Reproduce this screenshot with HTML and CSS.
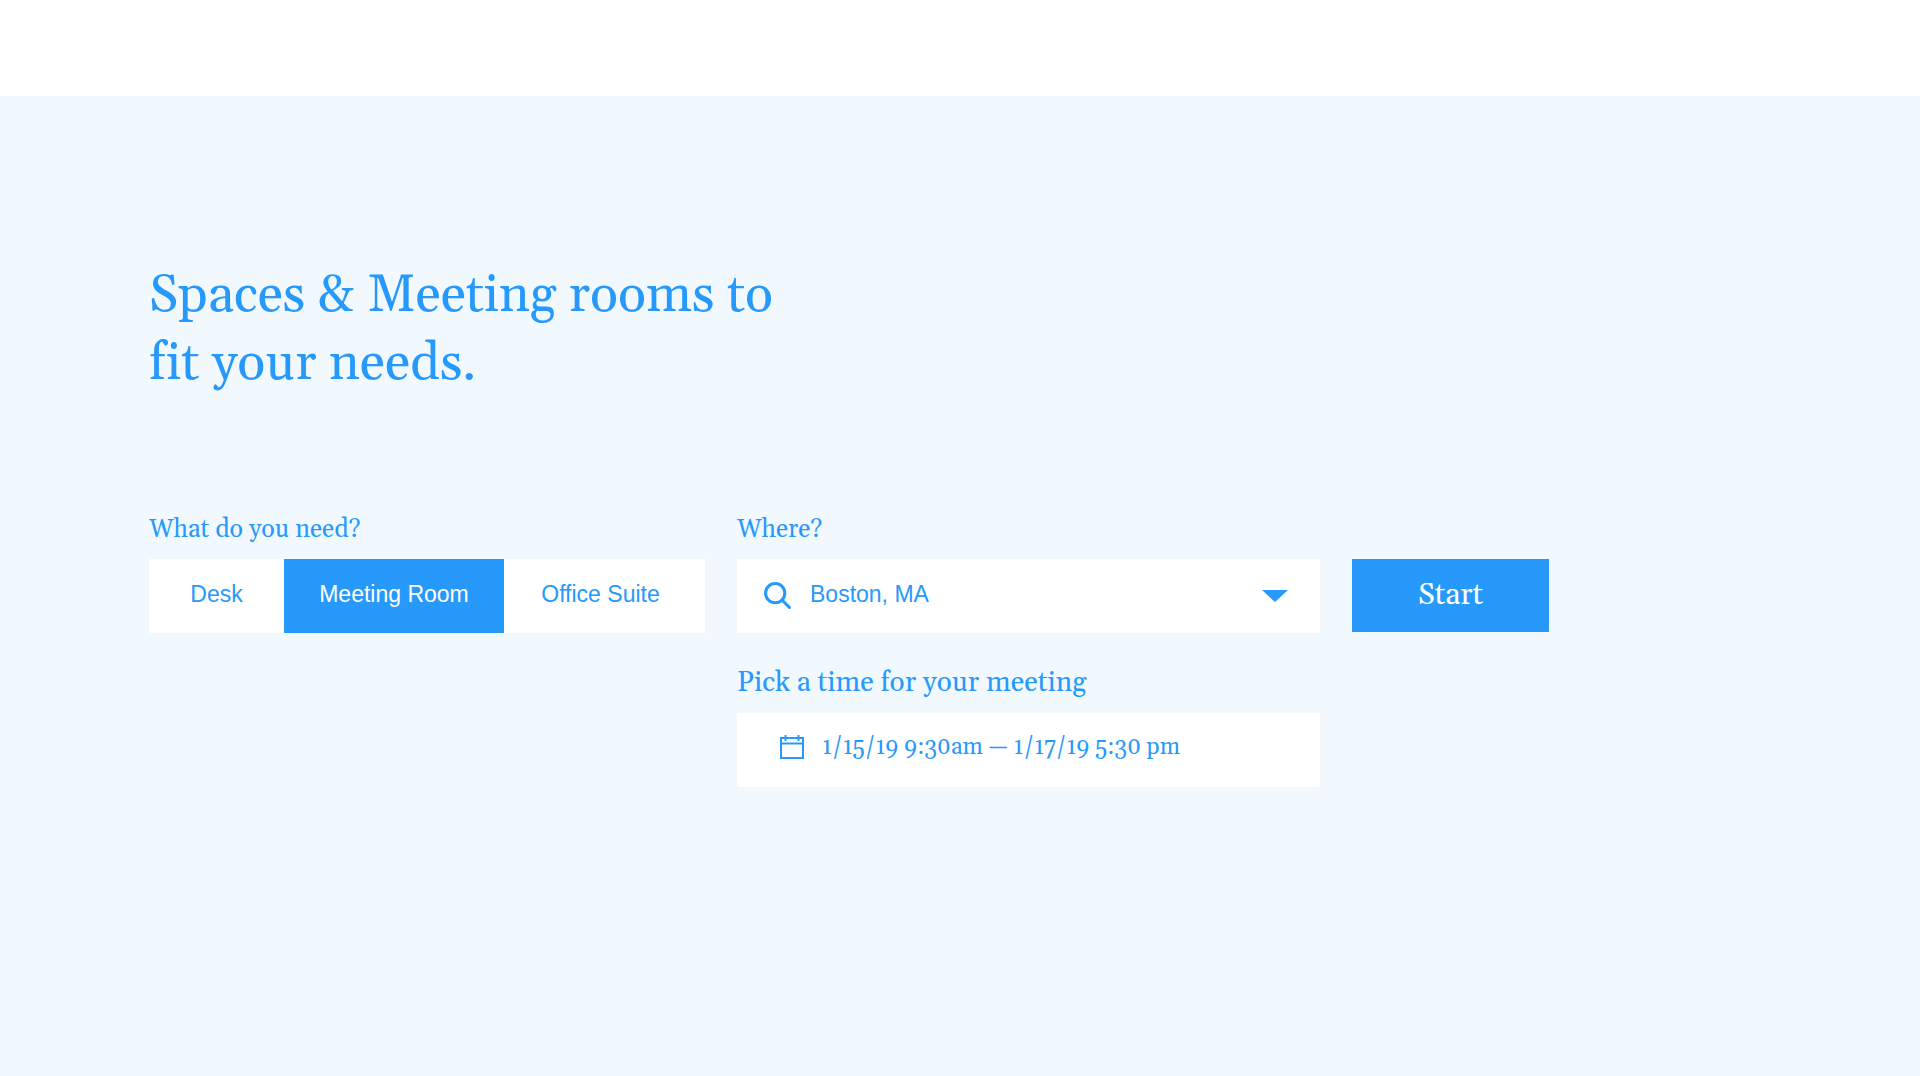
FILE: index.html
```html
<!DOCTYPE html>
<html lang="en">

<head>
    <meta charset="UTF-8">
    <meta name="viewport" content="width=device-width, initial-scale=1.0">
    <title>Spaces &amp; Meeting rooms</title>
    <link rel="stylesheet" href="styles.css">
</head>

<body>
    <header class="header"></header>

    <main class="hero">
        <h1 class="hero_title">Spaces &amp; Meeting rooms to<br>fit your needs.</h1>

        <form class="search_form">
            <div class="form_elem">
                <div class="form_label" id="need_label">What do you need?</div>
                <div class="tabs" role="group" aria-labelledby="need_label">
                    <button class="tab" type="button">Desk</button>
                    <button class="tab active" type="button">Meeting Room</button>
                    <button class="tab tab_suite" type="button">Office Suite</button>
                </div>
            </div>

            <div class="form_col">
                <div class="form_elem">
                    <label class="form_label" for="where">Where?</label>
                    <div class="field where_field">
                        <svg class="search_icon" viewBox="0 0 28 28" aria-hidden="true">
                            <circle cx="11.2" cy="11.2" r="9.6" />
                            <path d="M18 18L25.4 25.4" />
                        </svg>
                        <select class="field_input where_input" id="where" name="where">
                            <option>Boston, MA</option>
                        </select>
                        <svg class="caret_icon" viewBox="0 0 26 12" aria-hidden="true">
                            <path d="M0 0H26L13 12Z" />
                        </svg>
                    </div>
                </div>

                <div class="form_elem">
                    <label class="form_label time_label" for="time">Pick a time for your meeting</label>
                    <div class="field time_field">
                        <svg class="calendar_icon" viewBox="0 0 24 24" aria-hidden="true">
                            <path d="M1 3H23V23H1ZM1 8.5H23M5.5 0V6M18.5 0V6" />
                        </svg>
                        <input class="field_input time_input" type="text" id="time" name="time" value="1/15/19 9:30am — 1/17/19 5:30 pm">
                    </div>
                </div>
            </div>

            <button class="start_btn" type="submit">Start</button>
        </form>
    </main>
</body>

</html>
```

FILE: styles.css
```css
* {
    box-sizing: border-box;
}

body {
    margin: 0;
    min-height: 100vh;
    display: flex;
    flex-direction: column;

    background-color: #ffffff;
    color: #2699fb;
    font-family: Georgia, Gelasio, "Liberation Serif", serif;
}

button,
input,
select {
    margin: 0;
    border: none;
    border-radius: 0;
    color: inherit;
}

.header {
    height: 96px;
}

.hero {
    flex: 1;
    padding: 166px 149px 80px;

    background-color: #f1f9ff;
}

.hero_title {
    margin: 0 0 114px;

    font-size: 52px;
    font-weight: normal;
    font-variant-ligatures: none;
    line-height: 68px;
}

/* search form */
.search_form {
    display: grid;
    grid-template-columns: 556fr 583fr 197fr;
    gap: 32px;
    align-items: start;

    max-width: 1400px;
}

.form_col {
    display: flex;
    flex-direction: column;
    gap: 33px;
}

.form_label {
    display: block;
    height: 47px;

    font-size: 25px;
    line-height: 36px;
}

.time_label {
    font-size: 28px;
    line-height: 34px;
}

/* tabs */
.tabs {
    display: grid;
    grid-template-columns: 135fr 220fr 201fr;
    height: 74px;

    background-color: #ffffff;
}

.tab {
    padding: 0 0 4px;

    background-color: transparent;
    font-family: Arial, "Liberation Sans", sans-serif;
    font-size: 23px;
}

.tab_suite {
    padding-right: 8px;
}

.tab.active {
    background-color: #2699fb;
    color: #ffffff;
}

/* fields */
.field {
    display: flex;
    align-items: center;
    height: 74px;

    background-color: #ffffff;
}

.field_input {
    flex: 1;
    min-width: 0;
    height: 100%;
    padding: 0 0 4px;

    background-color: transparent;
    appearance: none;
}

.where_field {
    gap: 18px;
    padding: 0 32px 0 27px;
}

.where_input {
    font-family: Arial, "Liberation Sans", sans-serif;
    font-size: 23px;
}

.time_field {
    gap: 18px;
    padding: 0 32px 6px 43px;
}

.time_input {
    padding-bottom: 0;

    font-family: inherit;
    font-size: 23px;
    font-variant-numeric: oldstyle-nums;
}

/* icons */
.search_icon {
    width: 28px;
    height: 28px;

    fill: none;
    stroke: #2699fb;
    stroke-width: 3;
    stroke-linecap: round;
}

.caret_icon {
    width: 26px;
    height: 12px;

    fill: #2699fb;
}

.calendar_icon {
    width: 24px;
    height: 24px;

    fill: none;
    stroke: #2699fb;
    stroke-width: 2;
}

.start_btn {
    height: 73px;
    margin-top: 47px;
    padding: 0 0 2px;

    background-color: #2699fb;
    color: #ffffff;
    font-family: inherit;
    font-size: 30px;
}
```
